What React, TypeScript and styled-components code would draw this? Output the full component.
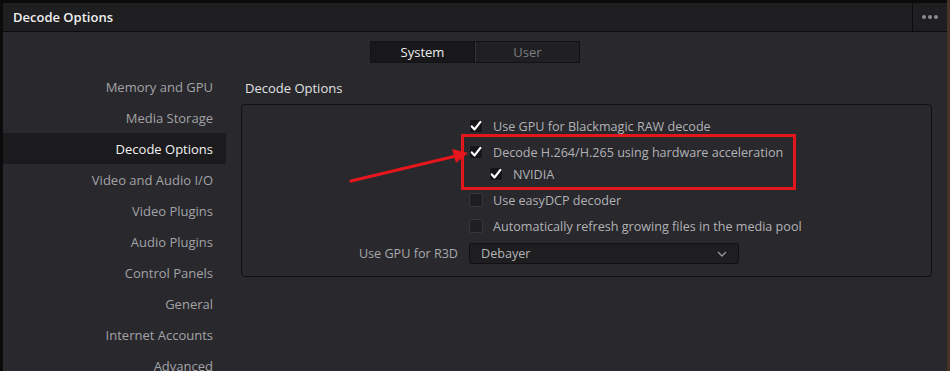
import styled, { createGlobalStyle } from "styled-components";

const GlobalStyle = createGlobalStyle`
    html, body {
        margin : 0;
        padding : 0;
        background : linear-gradient(to right, #0b0b0c 947px, #4a3326 947px);
        height : 371px;
        overflow : hidden;
    }
    * { box-sizing : border-box; }
`;

const sideItems = [
    "Memory and GPU",
    "Media Storage",
    "Decode Options",
    "Video and Audio I/O",
    "Video Plugins",
    "Audio Plugins",
    "Control Panels",
    "General",
    "Internet Accounts",
    "Advanced",
];

interface OptionRow {
    label : string;
    checked : boolean;
    indent? : boolean;
    height : number;
}

const options : OptionRow[] = [
    { label : "Use GPU for Blackmagic RAW decode", checked : true, height : 26 },
    { label : "Decode H.264/H.265 using hardware acceleration", checked : true, height : 26 },
    { label : "NVIDIA", checked : true, indent : true, height : 18 },
    { label : "Use easyDCP decoder", checked : false, height : 34 },
    { label : "Automatically refresh growing files in the media pool", checked : false, height : 18 },
];

function Check({ checked } : { checked : boolean }) {
    return (
        <Box $checked={checked}>
            {checked && (
                <svg width="12" height="12" viewBox="0 0 12 12">
                    <path d="M1.8 6.4 L4.6 9.4 L10.4 1.8" fill="none" stroke="#fff" strokeWidth="2.2" strokeLinecap="round" strokeLinejoin="round" />
                </svg>
            )}
        </Box>
    );
}

function App() {
    return (
        <>
            <GlobalStyle />
            <Window>
                <TitleBar>
                    <Title>Decode Options</Title>
                    <MenuButton>
                        <Dot /><Dot /><Dot />
                    </MenuButton>
                </TitleBar>
                <Body>
                    <Tabs>
                        <Tab $active>System</Tab>
                        <Tab>User</Tab>
                    </Tabs>
                    <Main>
                        <Sidebar>
                            {sideItems.map((item) => (
                                <SideItem key={item} $active={item === "Decode Options"}>{item}</SideItem>
                            ))}
                        </Sidebar>
                        <Content>
                            <Heading>Decode Options</Heading>
                            <Group>
                                {options.map((opt) => (
                                    <Row key={opt.label} $height={opt.height}>
                                        <span />
                                        <OptionLabel $indent={opt.indent}>
                                            <Check checked={opt.checked} />
                                            <span>{opt.label}</span>
                                        </OptionLabel>
                                    </Row>
                                ))}
                                <SelectRow>
                                    <FieldLabel>Use GPU for R3D</FieldLabel>
                                    <Select>
                                        <span>Debayer</span>
                                        <svg width="10" height="6" viewBox="0 0 10 6">
                                            <path d="M1 1 L5 5 L9 1" fill="none" stroke="#9a9a9e" strokeWidth="1.3" />
                                        </svg>
                                    </Select>
                                </SelectRow>
                            </Group>
                        </Content>
                    </Main>
                </Body>
                <Highlight />
                <Arrow width="130" height="40" viewBox="0 0 130 40">
                    <path d="M3 35 L108 10" stroke="#e5161c" strokeWidth="3.2" strokeLinecap="round" />
                    <path d="M120 7 L104 3 L108 17 Z" fill="#e5161c" />
                </Arrow>
            </Window>
        </>
    );
}

const Window = styled.div`
    position : relative;
    margin : 3px 0 0 3px;
    width : 944px;
    height : 368px;
    background : #28282d;
    font-family : "Open Sans", "Noto Sans", sans-serif;
    overflow : hidden;
`;

const TitleBar = styled.div`
    display : flex;
    align-items : stretch;
    height : 29px;
    background : #1f1f22;
    border-bottom : 1px solid #0c0c0d;
`;

const Title = styled.div`
    flex : 1;
    display : flex;
    align-items : center;
    padding-left : 10px;
    color : #f0f0f0;
    font-size : 13px;
    font-weight : 600;
`;

const MenuButton = styled.div`
    width : 35px;
    display : flex;
    align-items : center;
    justify-content : center;
    gap : 2px;
    border-left : 1px solid #0c0c0d;
`;

const Dot = styled.span`
    width : 4px;
    height : 4px;
    border-radius : 50%;
    background : #8c8c90;
`;

const Body = styled.div`
    display : flex;
    flex-direction : column;
`;

const Tabs = styled.div`
    display : flex;
    justify-content : center;
    margin-top : 9px;
`;

const Tab = styled.div<{ $active? : boolean }>`
    width : 105px;
    height : 22px;
    display : flex;
    align-items : center;
    justify-content : center;
    font-size : 13px;
    color : ${({ $active }) => ($active ? "#eeeeee" : "#7c7c80")};
    background : ${({ $active }) => ($active ? "#18181a" : "#202023")};
    border : 1px solid #121214;
    & + & { border-left : 1px solid #343438; }
`;

const Main = styled.div`
    display : flex;
    margin-top : 8px;
`;

const Sidebar = styled.div`
    width : 223px;
    display : flex;
    flex-direction : column;
`;

const SideItem = styled.div<{ $active? : boolean }>`
    height : 31px;
    display : flex;
    align-items : center;
    justify-content : flex-end;
    padding-right : 13px;
    font-size : 13px;
    color : ${({ $active }) => ($active ? "#f2f2f2" : "#a3a3a6")};
    background : ${({ $active }) => ($active ? "#1b1b1d" : "transparent")};
`;

const Content = styled.div`
    flex : 1;
    padding : 0 15px 0 15px;
`;

const Heading = styled.div`
    height : 33px;
    display : flex;
    align-items : center;
    padding-left : 4px;
    color : #e2e2e4;
    font-size : 13px;
`;

const Group = styled.div`
    border : 1px solid #0f0f10;
    border-radius : 4px;
    padding : 8px 0 0 0;
    height : 173px;
`;

const Row = styled.div<{ $height : number }>`
    display : grid;
    grid-template-columns : 216px 1fr;
    column-gap : 11px;
    height : ${({ $height }) => $height}px;
    align-items : center;
`;

const OptionLabel = styled.div<{ $indent? : boolean }>`
    display : flex;
    align-items : center;
    gap : 10px;
    padding-left : ${({ $indent }) => ($indent ? "20px" : "0")};
    font-size : 12.6px;
    color : #b2b2b5;
`;

const Box = styled.span<{ $checked : boolean }>`
    width : 14px;
    height : 14px;
    flex-shrink : 0;
    display : flex;
    align-items : center;
    justify-content : center;
    background : ${({ $checked }) => ($checked ? "#151517" : "#1f1f22")};
    border : 1px solid ${({ $checked }) => ($checked ? "#2c2c30" : "#38383c")};
    border-radius : 2px;
`;

const SelectRow = styled.div`
    display : grid;
    grid-template-columns : 216px 270px;
    column-gap : 11px;
    align-items : center;
    margin-top : 8px;
`;

const FieldLabel = styled.div`
    text-align : right;
    font-size : 12.6px;
    color : #a8a8ab;
`;

const Select = styled.div`
    height : 21px;
    display : flex;
    align-items : center;
    justify-content : space-between;
    padding : 0 11px 0 11px;
    background : #1e1e21;
    border : 1px solid #111113;
    border-radius : 3px;
    font-size : 12.6px;
    color : #b4b4b7;
`;

const Highlight = styled.div`
    position : absolute;
    left : 458px;
    top : 131px;
    width : 335px;
    height : 56px;
    border : 3px solid #e3161c;
    pointer-events : none;
`;

const Arrow = styled.svg`
    position : absolute;
    left : 345px;
    top : 143px;
    pointer-events : none;
`;

export default App;
